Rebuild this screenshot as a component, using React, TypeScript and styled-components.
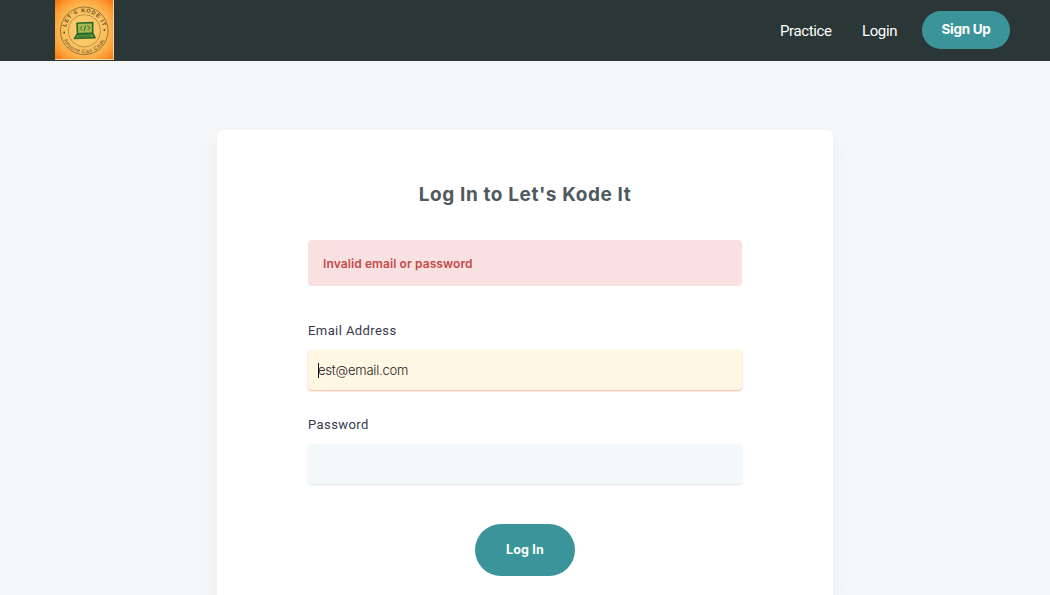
import React from "react";
import styled, { createGlobalStyle } from "styled-components";

const GlobalStyle = createGlobalStyle`
  *, *::before, *::after { box-sizing: border-box; }
  html, body { margin: 0; height: 100%; overflow: hidden; }
  body {
    background: #f4f6f8;
    font-family: Inter, "Liberation Sans", sans-serif;
    color: #36394d;
  }
`;

const Header = styled.header`
  height: 61px;
  padding: 0 40px 0 55px;
  background: #2b3636;
  display: flex;
  align-items: flex-start;
  justify-content: space-between;
`;

const LogoLink = styled.a`
  display: block;
  width: 59px;
  height: 60px;
`;

const Nav = styled.nav`
  display: flex;
  align-items: center;
  height: 60px;
`;

const NavLink = styled.a<{ $width: number; $gap: number }>`
  width: ${(p) => p.$width}px;
  margin-right: ${(p) => p.$gap}px;
  padding-top: 2px;
  color: #fff;
  font: 400 15px/20px Roboto, sans-serif;
  letter-spacing: -0.38px;
  white-space: nowrap;
`;

const Pill = styled.button<{ $large?: boolean }>`
  width: ${(p) => (p.$large ? 100 : 88)}px;
  height: ${(p) => (p.$large ? 52 : 38)}px;
  padding: 0 0 ${(p) => (p.$large ? 0 : 2)}px;
  border: 0;
  border-radius: 27px;
  background: #3a9499;
  color: #fff;
  font: 700 ${(p) => (p.$large ? 12.5 : 13.5)}px/20px Inter, sans-serif;
  letter-spacing: ${(p) => (p.$large ? 0.2 : -0.3)}px;
  white-space: nowrap;
`;

const Page = styled.main`
  display: flex;
  justify-content: center;
  padding-top: 69px;
`;

const Card = styled.section`
  width: 616px;
  height: 465px;
  padding: 50px 91px 0;
  border-radius: 6px 6px 0 0;
  background: #fff;
  box-shadow: 0 10px 20px rgba(30, 45, 60, 0.04);
`;

const Title = styled.h1`
  margin: 0 0 31px;
  color: #50595d;
  text-align: center;
  font: 700 19px/29px Inter, sans-serif;
  letter-spacing: 0.6px;
`;

const Alert = styled.div`
  height: 46px;
  padding: 0 15px;
  margin-bottom: 35px;
  border-radius: 4px;
  background: #f9e1e1;
  color: #c54a48;
  font: 600 12px/47px Inter, sans-serif;
  letter-spacing: 0.1px;
`;

const Field = styled.div`
  margin-bottom: 24px;
`;

const Label = styled.label`
  display: block;
  margin-bottom: 9px;
  color: #36394d;
  font: 400 13px/20px Roboto, sans-serif;
  letter-spacing: 0.42px;
`;

const InputWrap = styled.div`
  position: relative;
  height: 41px;
`;

const Input = styled.input<{ $filled?: boolean }>`
  display: block;
  width: 100%;
  height: 40px;
  padding: 0 10px;
  border: 0;
  outline: 0;
  border-radius: 4px;
  background: ${(p) => (p.$filled ? "#fff6e4" : "#f3f8fb")};
  box-shadow: 0 1px 2px ${(p) => (p.$filled ? "#f9b69f" : "#dce3e9")};
  color: #1d2025;
  font: 300 13px/20px Inter, sans-serif;
  letter-spacing: -0.2px;
`;

const Caret = styled.span`
  position: absolute;
  left: 10px;
  top: 13px;
  width: 1px;
  height: 15px;
  background: #111;
`;

const Actions = styled.div`
  display: flex;
  justify-content: center;
  padding-top: 15px;
`;

function Logo() {
  return (
    <svg width="59" height="60" viewBox="0 0 59 60" aria-label="Let's Kode It">
      <defs>
        <radialGradient id="glow" cx="50%" cy="50%" r="70%">
          <stop offset="0" stopColor="#fbd37a" />
          <stop offset="0.55" stopColor="#fbbd58" />
          <stop offset="0.8" stopColor="#fd9a30" />
          <stop offset="1" stopColor="#f66c10" />
        </radialGradient>
        <path id="upper" d="M10.5 31 A18.8 18.8 0 0 1 48.1 31" />
        <path id="lower" d="M6.9 31 A22.4 22.4 0 0 0 51.7 31" />
      </defs>
      <rect width="59" height="60" fill="url(#glow)" />
      <path d="M58.5 0V59.5H0" fill="none" stroke="#efd4a4" />
      <g fill="none" stroke="#806130" strokeWidth="0.8">
        <circle cx="29.3" cy="30.8" r="23.8" />
        <circle cx="29.3" cy="30.8" r="16.2" stroke="#a78442" />
      </g>
      <g fill="#5d4728" fontFamily="Liberation Sans, sans-serif">
        <text fontSize="5.4" fontWeight="700" letterSpacing="0.95" textAnchor="middle">
          <textPath href="#upper" startOffset="50%">LET'S KODE IT</textPath>
        </text>
        <text fontSize="5.4" letterSpacing="0.5" textAnchor="middle">
          <textPath href="#lower" startOffset="50%">Anyone Can Code</textPath>
        </text>
      </g>
      <g fill="#5d4728">
        <circle cx="9.2" cy="32.5" r="0.9" />
        <circle cx="49.4" cy="30" r="0.9" />
      </g>
      <g fill="none" stroke="#246a2b" strokeWidth="1.6" strokeLinejoin="round">
        <path d="M22 23.2 37.7 22.5V33L22.5 33.8Z" fill="#a8b650" />
        <path d="M22 34.5 19.5 38.5 40 37.6 37.7 33.5Z" fill="#78a446" />
        <path d="M23 36.4 36.5 35.8" strokeWidth="1" />
        <path d="m27 26.3-2 2 2 2m2.2.5 1.4-5m2-.1 2.3 2-2 2.2" strokeWidth="1" />
      </g>
    </svg>
  );
}

export default function App() {
  return (
    <>
      <GlobalStyle />
      <Header>
        <LogoLink><Logo /></LogoLink>
        <Nav>
          <NavLink $width={52} $gap={30}>Practice</NavLink>
          <NavLink $width={35} $gap={25}>Login</NavLink>
          <Pill>Sign Up</Pill>
        </Nav>
      </Header>
      <Page>
        <Card>
          <Title>Log In to Let's Kode It</Title>
          <Alert>Invalid email or password</Alert>
          <Field>
            <Label htmlFor="email">Email Address</Label>
            <InputWrap>
              <Input id="email" $filled defaultValue="est@email.com" />
              <Caret />
            </InputWrap>
          </Field>
          <Field>
            <Label htmlFor="password">Password</Label>
            <InputWrap>
              <Input id="password" type="password" />
            </InputWrap>
          </Field>
          <Actions>
            <Pill $large>Log In</Pill>
          </Actions>
        </Card>
      </Page>
    </>
  );
}
